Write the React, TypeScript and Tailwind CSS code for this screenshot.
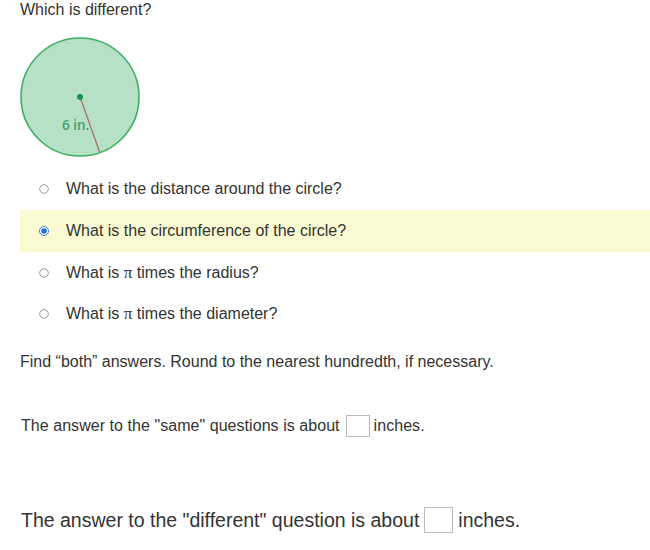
import React from "react";

function Radio({ checked }: { checked?: boolean }) {
  return (
    <span className="flex h-[10px] w-[10px] items-center justify-center">
      {checked ? (
        <svg width="10" height="10" viewBox="0 0 10 10">
          <circle cx="5" cy="5" r="4.5" fill="#fff" stroke="#3b7ce0" strokeWidth="1" />
          <circle cx="5" cy="5" r="2.8" fill="#1a73e8" />
        </svg>
      ) : (
        <svg width="10" height="10" viewBox="0 0 10 10">
          <circle cx="5" cy="5" r="4.3" fill="#fff" stroke="#8a8a8a" strokeWidth="0.9" />
        </svg>
      )}
    </span>
  );
}

const options = [
  { t: <>What is the distance around the circle?</>, c: false, h: "h-[42px]" },
  { t: <>What is the circumference of the circle?</>, c: true, h: "h-[42px]" },
  { t: <>What is <span className="font-['Liberation_Serif',serif] text-[17px]">π</span> times the radius?</>, c: false, h: "h-[41px]" },
  { t: <>What is <span className="font-['Liberation_Serif',serif] text-[17px]">π</span> times the diameter?</>, c: false, h: "h-[42px]" },
];

export default function App() {
  return (
    <div className="min-h-[550px] w-[650px] bg-white font-['Liberation_Sans',Arial,sans-serif] text-[#333]">
      <div className="pl-5 pt-[1px] text-[16px] leading-[18px]">Which is different?</div>
      <div className="mt-[18px] pl-5">
        <svg width="122" height="122" viewBox="0 0 122 122">
          <circle cx="60" cy="60" r="59" fill="#b6e1c6" stroke="#3fae63" strokeWidth="1.6" />
          <line x1="60" y1="60" x2="80" y2="116" stroke="#b0736a" strokeWidth="1.4" />
          <circle cx="60" cy="60" r="3" fill="#17934a" />
          <text x="42" y="93" fontSize="13.5" fontWeight="600" fill="#4a9f66" fontFamily="'Open Sans', sans-serif">6 in.</text>
        </svg>
      </div>
      <div className="mt-[9px] flex flex-col">
        {options.map((o, i) => (
          <div
            key={i}
            className={`ml-5 flex ${o.h} items-center ${o.c ? "bg-[#fafad2]" : ""}`}
          >
            <div className="ml-[19px] w-[27px]">
              <Radio checked={o.c} />
            </div>
            <div className="text-[16px] leading-[18px]">{o.t}</div>
          </div>
        ))}
      </div>
      <div className="mt-[18px] pl-5 text-[16px] leading-[18px]">
        Find “both” answers. Round to the nearest hundredth, if necessary.
      </div>
      <div className="mt-[44px] flex items-center pl-[21px] text-[16px] leading-[18px] tracking-[0.05px]">
        <span>The answer to the "same" questions is about</span>
        <span className="ml-[6px] mr-[4px] inline-block h-[22px] w-[24px] border border-[#bbb] bg-white" />
        <span>inches.</span>
      </div>
      <div className="mt-[70px] flex items-center pl-[21px] text-[19.5px] leading-[22px]">
        <span>The answer to the "different" question is about</span>
        <span className="ml-[5px] mr-[5px] inline-block h-[26px] w-[29px] border border-[#bbb] bg-white" />
        <span>inches.</span>
      </div>
    </div>
  );
}
